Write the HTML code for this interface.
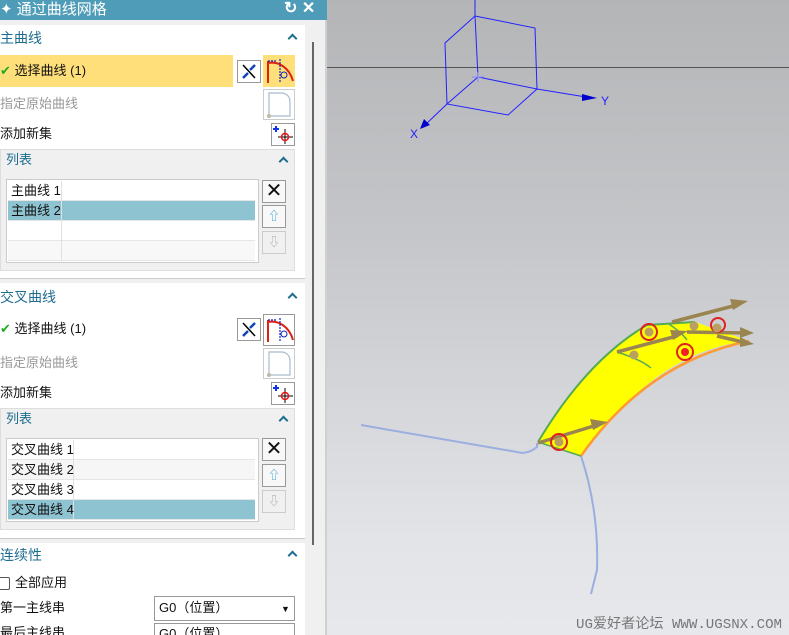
<!DOCTYPE html><html><head><meta charset="utf-8"><style>
*{margin:0;padding:0;box-sizing:border-box}
html,body{width:789px;height:635px;overflow:hidden}
body{position:relative;font-family:"Liberation Sans","Noto Sans CJK SC",sans-serif;font-size:12px;color:#111;background:#fff}
.a{position:absolute}
.t{position:absolute;white-space:nowrap;line-height:14px}
.h{color:#1d6d8f;font-size:14px}
.g{color:#999;font-size:13px}
.car{position:absolute;width:7px;height:7px;border-left:2px solid #1d6d8f;border-top:2px solid #1d6d8f;transform:rotate(45deg)}
.btn{position:absolute;border:1px solid #999;background:#fff}
.tb{position:absolute;border:1px solid #ccc;background:#fff}
.row{position:absolute;left:1px;right:3px;height:20px;border-bottom:1px solid #e6e6e6}
</style></head><body>
<div class="a" style="left:0;top:0;width:327px;height:20px;background:#4f9cb8"></div>
<div class="t" style="left:0;top:1px;color:#fff;font-size:15px;line-height:18px">✦ 通过曲线网格</div>
<div class="t" style="left:284px;top:0;color:#fff;font-size:16px;line-height:18px;font-weight:bold">↻ ✕</div>
<div class="a" style="left:305px;top:20px;width:22px;height:615px;background:#f0f0f0"></div>
<div class="a" style="left:312px;top:42px;width:2px;height:503px;background:#666"></div>
<div class="a" style="left:325px;top:20px;width:2px;height:615px;background:#d0d0d0"></div>
<div class="a" style="left:0;top:20px;width:305px;height:5px;background:#f0f0f0"></div>

<div class="t h" style="left:0;top:31px">主曲线</div><div class="car" style="left:289px;top:35px"></div>
<div class="a" style="left:0;top:55px;width:233px;height:32px;background:#ffdf7a"></div>
<div class="t" style="left:0;top:64px;font-size:13px"><span style="color:#2a2">✔</span> 选择曲线 (1)</div>
<div class="btn" style="left:237px;top:60px;width:24px;height:23px"></div>
<svg class="a" style="left:237px;top:60px" width="24" height="23"><path d="M6 5L18 18" stroke="#000" stroke-width="1.5"/><path d="M6 18l5-5M18 5l-5 5" stroke="#14b" stroke-width="2.5"/></svg>
<div class="a" style="left:263px;top:55px;width:32px;height:32px;background:#ffdf7a"></div>
<svg class="a" style="left:263px;top:55px" width="32" height="32"><path d="M5 28V6M5 8C15 6 26 12 30 26" stroke="#d21" stroke-width="2" fill="none"/><path d="M5 6h8M17 4v24" stroke="#12b" stroke-width="1.2" stroke-dasharray="2 1"/><circle cx="21" cy="20" r="3" stroke="#12b" fill="none"/></svg>
<div class="t g" style="left:0;top:97px">指定原始曲线</div>
<div class="btn" style="left:263px;top:89px;width:32px;height:31px;border-color:#ccc"></div>
<svg class="a" style="left:263px;top:89px" width="32" height="31"><path d="M6 27V4h12c6 0 9 4 9 9v14H6" stroke="#abc" fill="none" stroke-width="1.2"/><circle cx="6" cy="27" r="2" fill="#bba"/></svg>
<div class="t" style="left:0;top:127px;font-size:13px">添加新集</div>
<div class="btn" style="left:271px;top:123px;width:24px;height:23px"></div>
<svg class="a" style="left:271px;top:123px" width="24" height="23"><path d="M5 3v6M2 6h6" stroke="#13e" stroke-width="2"/><path d="M14 6v15M7 14h15" stroke="#000"/><circle cx="14" cy="14" r="3.5" stroke="#e11" fill="none" stroke-width="1.5"/></svg>
<div class="a" style="left:0;top:149px;width:295px;height:122px;background:#f0f0f0;border:1px solid #ddd"></div>
<div class="t h" style="left:6px;top:153px;font-size:13px">列表</div><div class="car" style="left:280px;top:158px"></div>
<div class="tb" style="left:6px;top:179px;width:253px;height:84px">
<div class="row" style="top:1px"></div><div class="row" style="top:21px;background:#8ec3d2"></div><div class="row" style="top:41px"></div><div class="row" style="top:61px;background:#f8f8f8"></div>
<div class="a" style="left:54px;top:1px;width:1px;height:80px;background:#e0e0e0"></div>
<div class="t" style="left:4px;top:4px;font-size:13px">主曲线 1</div><div class="t" style="left:4px;top:24px;font-size:13px">主曲线 2</div></div>
<div class="btn" style="left:262px;top:180px;width:24px;height:23px;background:#f8f8f8;text-align:center;font-size:20px;line-height:20px">✕</div>
<div class="btn" style="left:262px;top:205px;width:24px;height:23px;background:#f8f8f8;color:#39c;text-align:center;line-height:20px">⇧</div>
<div class="btn" style="left:262px;top:231px;width:24px;height:23px;background:#f0f0f0;border-color:#ccc;color:#aaa;text-align:center;line-height:20px">⇩</div>
<div class="a" style="left:0;top:278px;width:305px;height:5px;background:#f0f0f0;border-top:1px solid #ccc"></div>

<div class="t h" style="left:0;top:290px">交叉曲线</div><div class="car" style="left:289px;top:294px"></div>
<div class="t" style="left:0;top:322px;font-size:13px"><span style="color:#2a2">✔</span> 选择曲线 (1)</div>
<div class="btn" style="left:237px;top:318px;width:24px;height:23px"></div>
<svg class="a" style="left:237px;top:318px" width="24" height="23"><path d="M6 5L18 18" stroke="#000" stroke-width="1.5"/><path d="M6 18l5-5M18 5l-5 5" stroke="#14b" stroke-width="2.5"/></svg>
<div class="btn" style="left:263px;top:314px;width:32px;height:32px"></div>
<svg class="a" style="left:263px;top:314px" width="32" height="32"><path d="M5 28V6M5 8C15 6 26 12 30 26" stroke="#d21" stroke-width="2" fill="none"/><path d="M5 6h8M17 4v24" stroke="#12b" stroke-width="1.2" stroke-dasharray="2 1"/><circle cx="21" cy="20" r="3" stroke="#12b" fill="none"/></svg>
<div class="t g" style="left:0;top:356px">指定原始曲线</div>
<div class="btn" style="left:263px;top:348px;width:32px;height:31px;border-color:#ccc"></div>
<svg class="a" style="left:263px;top:348px" width="32" height="31"><path d="M6 27V4h12c6 0 9 4 9 9v14H6" stroke="#abc" fill="none" stroke-width="1.2"/><circle cx="6" cy="27" r="2" fill="#bba"/></svg>
<div class="t" style="left:0;top:386px;font-size:13px">添加新集</div>
<div class="btn" style="left:271px;top:382px;width:24px;height:23px"></div>
<svg class="a" style="left:271px;top:382px" width="24" height="23"><path d="M5 3v6M2 6h6" stroke="#13e" stroke-width="2"/><path d="M14 6v15M7 14h15" stroke="#000"/><circle cx="14" cy="14" r="3.5" stroke="#e11" fill="none" stroke-width="1.5"/></svg>
<div class="a" style="left:0;top:408px;width:295px;height:122px;background:#f0f0f0;border:1px solid #ddd"></div>
<div class="t h" style="left:6px;top:412px;font-size:13px">列表</div><div class="car" style="left:280px;top:417px"></div>
<div class="tb" style="left:6px;top:438px;width:253px;height:84px">
<div class="row" style="top:1px"></div><div class="row" style="top:21px;background:#f6f6f6"></div><div class="row" style="top:41px"></div><div class="row" style="top:61px;background:#8ec3d2"></div>
<div class="a" style="left:66px;top:1px;width:1px;height:80px;background:#e0e0e0"></div>
<div class="t" style="left:4px;top:4px;font-size:13px">交叉曲线 1</div><div class="t" style="left:4px;top:24px;font-size:13px">交叉曲线 2</div><div class="t" style="left:4px;top:44px;font-size:13px">交叉曲线 3</div><div class="t" style="left:4px;top:64px;font-size:13px">交叉曲线 4</div></div>
<div class="btn" style="left:262px;top:438px;width:24px;height:23px;background:#f8f8f8;text-align:center;font-size:20px;line-height:20px">✕</div>
<div class="btn" style="left:262px;top:464px;width:24px;height:23px;background:#f8f8f8;color:#39c;text-align:center;line-height:20px">⇧</div>
<div class="btn" style="left:262px;top:490px;width:24px;height:23px;background:#f0f0f0;border-color:#ccc;color:#aaa;text-align:center;line-height:20px">⇩</div>
<div class="a" style="left:0;top:538px;width:305px;height:5px;background:#f0f0f0;border-top:1px solid #ccc"></div>

<div class="t h" style="left:0;top:548px">连续性</div><div class="car" style="left:289px;top:552px"></div>
<div class="a" style="left:-3px;top:577px;width:13px;height:13px;border:1px solid #555;border-radius:2px"></div>
<div class="t" style="left:15px;top:576px;font-size:13px">全部应用</div>
<div class="t" style="left:0;top:601px;font-size:13px">第一主线串</div>
<div class="a" style="left:154px;top:596px;width:141px;height:25px;border:1px solid #999"></div>
<div class="t" style="left:159px;top:601px;font-size:13px">G0（位置）</div><div class="t" style="left:281px;top:602px;font-size:9px">▼</div>
<div class="t" style="left:0;top:626px;font-size:13px">最后主线串</div>
<div class="a" style="left:154px;top:623px;width:141px;height:25px;border:1px solid #999"></div>
<div class="t" style="left:159px;top:627px;font-size:13px">G0（位置）</div>

<div class="a" style="left:327px;top:0;width:462px;height:635px;background:linear-gradient(#b4b5b7,#c4c5c8 35%,#e2e4e8 85%,#e6e8ec)"></div>
<svg class="a" style="left:327px;top:0" width="462" height="635">
<line x1="0" y1="67.5" x2="462" y2="67.5" stroke="#555"/>
<g stroke="#22f" fill="none" stroke-width="1">
<path d="M148 0V16M148 16L208 28L210 89L181 115L120 104L118 43Z M148 16L151 77L210 89 M151 77L120 104"/>
<path d="M210 89L265 98M120 104L98 125"/>
</g>
<path d="M145 77h12M151 72v10" stroke="#88f"/>
<path d="M255 94l15 4-15 3z" fill="#00c"/><text x="274" y="105" fill="#22f" font-size="12" font-family="Liberation Sans">Y</text>
<path d="M93 129l4-10 6 6z" fill="#00c"/><text x="83" y="138" fill="#22f" font-size="12" font-family="Liberation Sans">X</text>
<path d="M34 425L190 452Q200 455 210 447L210 443" stroke="#9aaee0" stroke-width="2" fill="none"/>
<path d="M254 456Q272 510 270 570L264 594" stroke="#9aaee0" stroke-width="2" fill="none"/>
<path d="M211 442Q260 360 320 325L368 322L422 341Q330 350 254 456Z" fill="#ff0"/>
<path d="M211 442Q260 360 320 325L368 322" stroke="#5a5" stroke-width="2" fill="none"/>
<path d="M254 456Q320 362 422 341" stroke="#f93" stroke-width="2.5" fill="none"/>
<path d="M211 442L254 456M290 352Q315 360 324 368M342 324Q355 333 360 340" stroke="#5a5" stroke-width="1.5" fill="none"/>
<g stroke="#9a8550" stroke-width="3.5"><path d="M211 443L270 425M290 352L350 336M345 322L410 305M360 332L420 333M390 336L420 343"/></g>
<g fill="#9a8550"><path d="M263 419l18 3-15 8z"/><path d="M343 330l18 1-15 9z"/><path d="M403 299l18 2-15 9z"/><path d="M413 327l14 6-14 5z"/><path d="M413 337l14 7-14 3z"/></g>
<g fill="none" stroke="#d22" stroke-width="2"><circle cx="232" cy="442" r="8"/><circle cx="322" cy="332" r="8"/><circle cx="358" cy="352" r="8"/><circle cx="391" cy="325" r="7"/></g>
<g fill="#b9a060"><circle cx="232" cy="442" r="4.5"/><circle cx="322" cy="332" r="4.5"/><circle cx="307" cy="355" r="4.5"/><circle cx="367" cy="326" r="4.5"/><circle cx="390" cy="328" r="4.5"/></g>
<circle cx="358" cy="352" r="4" fill="#e22"/>
<text x="249" y="628" fill="#777" font-size="14" textLength="206" lengthAdjust="spacingAndGlyphs" font-family="Liberation Mono,Noto Sans CJK SC,monospace">UG爱好者论坛 WWW.UGSNX.COM</text>
</svg>
</body></html>
